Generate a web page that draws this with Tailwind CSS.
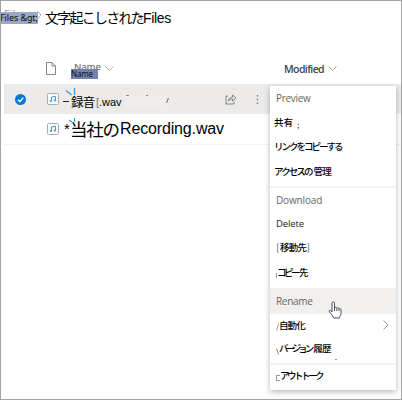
<!DOCTYPE html>
<html lang="ja">
<head>
<meta charset="utf-8">
<title>Files</title>
<script src="https://cdn.jsdelivr.net/npm/@tailwindcss/browser@4"></script>
</head>
<body class="w-[402px] h-[400px] overflow-hidden bg-white font-['Liberation_Sans','Noto_Sans_CJK_JP',sans-serif] text-black">
<div class="relative w-[402px] h-[400px] border border-[#a3a3a3] overflow-hidden flex flex-col whitespace-nowrap">
  <!-- breadcrumb -->
  <header class="relative h-[52px] shrink-0 flex items-start">
    <div class="absolute left-[3px] top-[6px] h-[6px] overflow-hidden text-[11px] leading-[14px] text-[#999] font-['Open_Sans',sans-serif]">Files</div>
    <div class="relative mt-[11px] -ml-px w-[38px] h-[12px] bg-[#9aa8c4] text-[9px] leading-[11px] tracking-[-0.1px] text-[#111] font-['Noto_Sans',sans-serif]">Files &amp;gt;</div>
    <svg class="mt-[9px] -ml-px w-[5px] h-[10px]" viewBox="0 0 5 10" fill="none" stroke="#a8a8a8"><path d="M.5 1 4 5 .5 9"/></svg>
    <h1 class="mt-[6px] ml-[3px] h-[20px] flex items-center leading-[20px]"><span class="w-[98px] text-[14px] tracking-[-1.75px] font-['Noto_Sans_CJK_JP',sans-serif]">文字起こしされた</span><span class="text-[14px] tracking-[-0.3px] mt-px">Files</span></h1>
    <div class="absolute left-[137px] top-[10px] text-[9px] leading-[12px] text-[#555]">s</div>
  </header>

  <!-- column headings -->
  <div class="relative h-[31px] shrink-0 flex">
    <svg class="mt-[9px] ml-[45px] w-[10px] h-[13px]" viewBox="0 0 10 13" fill="none" stroke="#888"><path d="M.5 .5h5.500l3.500 3.500v8.500h-9zM6 .5V4h3.500"/></svg>
    <div class="absolute left-[73px] top-[8px] text-[9.5px] leading-[12px] font-semibold tracking-[-0.2px] text-[#777] font-['Open_Sans',sans-serif]">Name</div>
    <div class="relative mt-[16px] ml-[15px] w-[27px] h-[10px] bg-[#7482aa] text-[8px] leading-[9px] text-[#0d1224] tracking-[-0.2px] font-['Noto_Sans',sans-serif]">Name</div>
    <svg class="mt-[13px] ml-[7px] w-[9px] h-[6px]" viewBox="0 0 9 6" fill="none" stroke="#aaa"><path d="m.5 .5 4 4 4-4"/></svg>
    <div class="w-[40px] mt-[9px] ml-[170px] text-[10.5px] leading-[14px] tracking-[-0.6px] font-semibold text-[#444] font-['Open_Sans',sans-serif]">Modified</div>
    <svg class="mt-[13px] ml-[4px] w-[9px] h-[6px]" viewBox="0 0 9 6" fill="none" stroke="#aaa"><path d="m.5 .5 4 4 4-4"/></svg>
  </div>

  <!-- selected file -->
  <div class="relative h-[30px] ml-[3px] shrink-0 bg-[#ecebea] flex items-center">
    <svg class="ml-[11px] w-[11px] h-[11px]" viewBox="0 0 11 11"><circle cx="5.500" cy="5.500" r="5.500" fill="#0878d4"/><path d="m3 5.700 1.900 1.800L8.200 3.800" fill="none" stroke="#fff" stroke-width="1.300"/></svg>
    <svg class="ml-[21px] w-[12px] h-[12px]" viewBox="0 0 12 12"><rect x=".5" y=".5" width="11" height="11" rx="1" fill="#f8fafc" stroke="#aaa"/><path d="M4.500 8V4l4-.8v4.300" fill="none" stroke="#3e9be0"/><circle cx="3.900" cy="8" r="1.100" fill="#3e9be0"/><circle cx="7.800" cy="7.500" r="1.100" fill="#3e9be0"/></svg>
    <div class="ml-[4px] mt-[5px] flex items-center leading-[16px] w-[60px]"><span class="w-[6px] mr-[2px] h-px bg-[#222]"></span><span class="w-[25px] text-[12.5px] tracking-[-0.7px] font-['Noto_Sans_CJK_JP',sans-serif]">録音</span><span class="text-[#777] text-[11px] w-[4px]">[</span><span class="text-[11px] -ml-px">.wav</span></div>
    <svg class="absolute left-[60px] top-[3px] w-[14px] h-[10px]" viewBox="0 0 14 10" fill="none" stroke="#319be5" stroke-width="1.300"><path d="m2 3.500 5.500 4.500M10.500 1v7"/></svg>
    <svg class="absolute left-[120px] top-[11px] w-[46px] h-[10px]" viewBox="0 0 46 10" fill="none"><path d="M2 .5h3M22 .5h2" stroke="#888"/><path d="m44.500 3-2 5" stroke="#666"/></svg>
    <div class="absolute left-[122px] top-[12px] w-[40px] h-[14px] bg-[#eeedec]"></div>
    <svg class="ml-[102px] w-[12px] h-[11px]" viewBox="0 0 12 11" fill="none" stroke="#777" stroke-width=".9"><path d="M3 2H1v8h8V7.500M3.500 7.200C3.700 4.500 5 3.200 7.500 3.200V1L11 4 7.500 7V5C5.500 5 4.200 5.500 3.500 7.200Z"/></svg>
    <svg class="ml-[19px] w-[3px] h-[11px]" viewBox="0 0 3 11" fill="#777"><path d="M.8 1h1.400v1.400H.8zM.8 4.800h1.400v1.400H.8zM.8 8.600h1.400V10H.8z"/></svg>
  </div>

  <!-- second file -->
  <div class="relative h-[31px] ml-[3px] shrink-0 border-b border-[#f3f3f3] flex items-center">
    <svg class="ml-[43px] w-[12px] h-[12px]" viewBox="0 0 12 12"><rect x=".5" y=".5" width="11" height="11" rx="1" fill="#f8fafc" stroke="#aaa"/><path d="M4.500 8V4l4-.8v4.300" fill="none" stroke="#3e9be0"/><circle cx="3.900" cy="8" r="1.100" fill="#3e9be0"/><circle cx="7.800" cy="7.500" r="1.100" fill="#3e9be0"/></svg>
    <div class="ml-[5px] flex items-center leading-[20px]"><span class="w-[6px] text-[15px]">*</span><span class="w-[50px] text-[17.5px] tracking-[-1.200px] font-['Noto_Sans_CJK_JP',sans-serif]">当社の</span><span class="text-[16px] tracking-[-0.150px]">Recording.wav</span></div>
    <svg class="absolute left-[62px] top-[4px] w-[12px] h-[5px]" viewBox="0 0 12 5" fill="none" stroke="#319be5" stroke-width="1.200"><path d="m3 2 3 2M8.500 0v4"/></svg>
  </div>

  <!-- context menu -->
  <nav class="absolute left-[269px] top-[85px] w-[126px] h-[304px] bg-white shadow-[0_2px_6px_rgba(0,0,0,0.28)] flex flex-col text-[9.5px] font-['Noto_Sans_CJK_JP',sans-serif] font-medium">
    <div class="h-[24px] pl-[6px] flex items-center text-[10px] text-[#666] font-['Open_Sans',sans-serif] font-normal tracking-[-0.300px] pt-px">Preview</div>
    <div class="h-[24px] pl-[4px] flex items-center">共有<span class="text-[8px] ml-[4px] mt-[5px] text-[#555]">;</span></div>
    <div class="h-[25px] pl-[4px] flex items-center tracking-[-2px]">リンクをコピーする</div>
    <div class="h-[27px] pl-[4px] pb-[3px] flex items-center tracking-[-1.900px]">アクセスの<span class="tracking-[-0.700px] ml-[2px]">管理</span></div>
    <div class="h-[2px] bg-[#f2f2f2]"></div>
    <div class="h-[24px] pl-[6px] flex items-center text-[10px] text-[#666] font-['Open_Sans',sans-serif] font-normal tracking-[-0.150px]">Download</div>
    <div class="h-[26px] pl-[6px] pb-px flex items-center text-[9.5px] text-[#222] font-['Open_Sans',sans-serif] font-normal tracking-[-0.100px]">Delete</div>
    <div class="h-[22px] pl-[6px] pb-[3px] flex items-center"><span class="text-[#4d82b8] w-[4px]">[</span><span class="tracking-[-0.700px]">移動先</span><span class="text-[#4d82b8]">]</span></div>
    <div class="h-[28px] pl-[6px] pb-[3px] flex items-center"><span class="w-px h-[5px] mt-[5px] bg-[#999]"></span><span class="tracking-[-2.500px]">コピー</span><span class="ml-[1px]">先</span></div>
    <div class="relative h-[26px] pl-[6px] flex items-center bg-[#f1f0ef] text-[10px] text-[#666] font-['Open_Sans',sans-serif] font-normal tracking-[-0.300px]">Rename
      <svg class="absolute left-[58px] top-[13px] w-[14px] h-[18px]" viewBox="0 0 14 18"><path d="M4 11V2.200C4 .4 6.500.4 6.500 2.200V7c.2-1 2.100-1 2.300.3.400-1 2-.7 2.200.6.500-.8 2-.3 2 1v3.500c0 2-1.500 3-1.500 4.600H5.500C5 14.500 3 13 1.300 10.700.7 9.700 2 8.700 2.800 9.500z" fill="#fff" stroke="#4b4f5c"/><path d="M6.500 7v3M8.800 7.500V10M11 8v2" stroke="#4b4f5c"/></svg>
    </div>
    <div class="h-[23px] pl-[6px] pr-[7px] pb-px flex items-center"><svg class="w-[3px] h-[8px] mt-[3px]" viewBox="0 0 3 8" fill="none" stroke="#999"><path d="M.5 7.500 2.500 1"/></svg><span class="tracking-[-0.900px]">自動化</span><svg class="ml-auto w-[6px] h-[10px]" viewBox="0 0 6 10" fill="none" stroke="#999"><path d="m.5.5 4.500 4.500-4.500 4.500"/></svg></div>
    <div class="relative h-[26px] pl-[6px] pb-[3px] flex items-center"><svg class="w-[3px] h-[7px] mt-[5px]" viewBox="0 0 3 7" fill="none" stroke="#888"><path d="m.5.5 2 6"/></svg><span class="tracking-[-3px]">バージョン</span><span class="ml-[2px] tracking-[-0.700px]">履歴</span><span class="absolute left-[65px] top-[22px] w-[2px] h-px bg-[#999]"></span></div>
    <div class="h-[2px] bg-[#f2f2f2]"></div>
    <div class="h-[21px] pl-[6px] flex items-center"><span class="w-[4px] h-[6px] mt-[4px] border border-r-0 border-[#999]"></span><span class="tracking-[-2.500px]">アウトトーク</span></div>
  </nav>
</div>
</body>
</html>
